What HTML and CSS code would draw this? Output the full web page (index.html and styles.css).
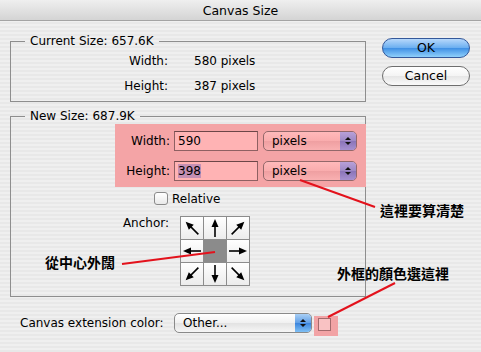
FILE: index.html
```html
<!DOCTYPE html>
<html lang="zh-Hant">

<head>
   <meta charset="UTF-8">
   <title>Canvas Size</title>
   <link rel="stylesheet" href="styles.css">
</head>

<body>
   <div class="window">
      <!-- Başlık çubuğu -->
      <div class="titlebar">Canvas Size</div>

      <div class="content">
         <div class="main">
            <!-- Mevcut boyut -->
            <fieldset class="group current">
               <legend>Current Size: 657.6K</legend>
               <div class="info-row"><span class="info-label">Width:</span><span>580 pixels</span></div>
               <div class="info-row"><span class="info-label">Height:</span><span>387 pixels</span></div>
            </fieldset>

            <!-- Yeni boyut -->
            <fieldset class="group new">
               <legend>New Size: 687.9K</legend>
               <div class="highlight">
                  <div class="field-row">
                     <label class="field-label" for="w">Width:</label>
                     <div class="text-box" id="w">590</div>
                     <div class="select pink">pixels<span class="stepper"><i class="up"></i><i class="down"></i></span></div>
                  </div>
                  <div class="field-row">
                     <label class="field-label" for="h">Height:</label>
                     <div class="text-box" id="h"><span class="selected">398</span></div>
                     <div class="select pink">pixels<span class="stepper"><i class="up"></i><i class="down"></i></span></div>
                  </div>
               </div>

               <div class="check-row">
                  <span class="checkbox"></span>
                  <span>Relative</span>
               </div>

               <div class="anchor-row">
                  <span class="anchor-label">Anchor:</span>
                  <div class="anchor-grid">
                     <div class="cell"><svg viewBox="0 0 22 22"><g transform="rotate(-45 11 11)"><line x1="11" y1="20" x2="11" y2="8" /><polygon points="11,2 7.5,10 14.5,10" /></g></svg></div>
                     <div class="cell"><svg viewBox="0 0 22 22"><g><line x1="11" y1="20" x2="11" y2="8" /><polygon points="11,2 7.5,10 14.5,10" /></g></svg></div>
                     <div class="cell"><svg viewBox="0 0 22 22"><g transform="rotate(45 11 11)"><line x1="11" y1="20" x2="11" y2="8" /><polygon points="11,2 7.5,10 14.5,10" /></g></svg></div>
                     <div class="cell"><svg viewBox="0 0 22 22"><g transform="rotate(-90 11 11)"><line x1="11" y1="20" x2="11" y2="8" /><polygon points="11,2 7.5,10 14.5,10" /></g></svg></div>
                     <div class="cell center"></div>
                     <div class="cell"><svg viewBox="0 0 22 22"><g transform="rotate(90 11 11)"><line x1="11" y1="20" x2="11" y2="8" /><polygon points="11,2 7.5,10 14.5,10" /></g></svg></div>
                     <div class="cell"><svg viewBox="0 0 22 22"><g transform="rotate(-135 11 11)"><line x1="11" y1="20" x2="11" y2="8" /><polygon points="11,2 7.5,10 14.5,10" /></g></svg></div>
                     <div class="cell"><svg viewBox="0 0 22 22"><g transform="rotate(180 11 11)"><line x1="11" y1="20" x2="11" y2="8" /><polygon points="11,2 7.5,10 14.5,10" /></g></svg></div>
                     <div class="cell"><svg viewBox="0 0 22 22"><g transform="rotate(135 11 11)"><line x1="11" y1="20" x2="11" y2="8" /><polygon points="11,2 7.5,10 14.5,10" /></g></svg></div>
                  </div>
               </div>
            </fieldset>
         </div>

         <!-- Butonlar -->
         <div class="side">
            <button class="btn ok">OK</button>
            <button class="btn cancel">Cancel</button>
         </div>
      </div>

      <!-- Genişletme rengi -->
      <div class="ext-row">
         <span class="ext-label">Canvas extension color:</span>
         <div class="select wide">Other...<span class="stepper aqua"><i class="up"></i><i class="down"></i></span></div>
         <div class="swatch-mark"><span class="swatch"></span></div>
      </div>

      <!-- Açıklama notları -->
      <svg class="marks" viewBox="0 0 481 352">
         <line x1="300" y1="180" x2="375" y2="207" />
         <line x1="122" y1="264" x2="215" y2="252" />
         <line x1="395" y1="283" x2="328" y2="317" />
      </svg>
      <span class="note note-size">這裡要算清楚</span>
      <span class="note note-anchor">從中心外闊</span>
      <span class="note note-color">外框的顏色選這裡</span>
   </div>
</body>

</html>
```

FILE: styles.css
```css
/* Sayfa genel düzeni */
body {
   margin: 0;
   font-family: "DejaVu Sans", "Noto Sans CJK TC", sans-serif;
   font-size: 12px;
   color: #000;
}

.window {
   position: relative;
   width: 481px;
   height: 352px;
   overflow: hidden;
   background: repeating-linear-gradient(#efefef 0 2px, #e8e8e8 2px 4px);
}

/* Başlık çubuğu */
.titlebar {
   height: 21px;
   line-height: 21px;
   text-align: center;
   font-size: 12.5px;
   background: linear-gradient(#efefef, #d4d4d4);
   border-bottom: 1px solid #a3a3a3;
   box-sizing: border-box;
}

.content {
   display: flex;
   padding-left: 10px;
}

.main {
   width: 356px;
   padding-top: 12px;
}

/* Grup kutuları */
.group {
   margin: 0;
   padding: 0;
   border: 1px solid #8e8e8e;
   min-width: 0;
}

.group legend {
   margin-left: 14px;
   padding: 0 5px;
   line-height: 16px;
}

.current {
   padding-bottom: 2px;
}

.new {
   margin-top: 6px;
   padding-bottom: 10px;
}

.info-row {
   display: flex;
   line-height: 25px;
}

.info-label {
   width: 157px;
   text-align: right;
   margin-right: 26px;
}

/* Pembe vurgulu alan */
.highlight {
   margin-left: 104px;
   margin-right: -1px;
   padding: 7px 0 6px;
   background: #f4a4a6;
   display: flex;
   flex-direction: column;
   gap: 10px;
}

.field-row {
   display: flex;
   align-items: center;
   height: 20px;
}

.field-label {
   width: 55px;
   text-align: right;
   margin-right: 4px;
}

.text-box {
   width: 84px;
   height: 20px;
   box-sizing: border-box;
   border: 1px solid #8e6062;
   border-top-color: #6d4648;
   background: #ffb3b4;
   padding-left: 3px;
   line-height: 18px;
   margin-right: 5px;
}

.selected {
   background: #c48fb3;
}

/* Açılır liste */
.select {
   position: relative;
   height: 20px;
   box-sizing: border-box;
   border: 1px solid #8a8a8a;
   border-radius: 5px;
   padding-left: 8px;
   line-height: 18px;
   background: linear-gradient(#ffffff, #f0f0f0 50%, #e2e2e2 51%, #f6f6f6);
}

.select.pink {
   width: 94px;
   border-color: #93686a;
   background: linear-gradient(#ffb9ba, #f9acad 50%, #ef9fa1 51%, #f9b0b1);
}

.stepper {
   position: absolute;
   right: 0;
   top: 0;
   bottom: 0;
   width: 16px;
   border-radius: 0 4px 4px 0;
   background: linear-gradient(#b8a0d8, #9d88c4 50%, #8a74b8 51%, #a791d0);
   display: flex;
   flex-direction: column;
   align-items: center;
   justify-content: center;
   gap: 2px;
}

.stepper.aqua {
   background: linear-gradient(#a9cff5, #5f9ee6 50%, #3b84dc 51%, #7fc0f5);
}

.stepper i {
   width: 0;
   height: 0;
   border-left: 3px solid transparent;
   border-right: 3px solid transparent;
}

.stepper .up {
   border-bottom: 3px solid #111;
}

.stepper .down {
   border-top: 3px solid #111;
}

/* Onay kutusu */
.check-row {
   display: flex;
   align-items: center;
   height: 17px;
   margin: 3px 0 0 143px;
}

.checkbox {
   width: 14px;
   height: 13px;
   box-sizing: border-box;
   border: 1px solid #8a8a8a;
   border-radius: 3px;
   background: linear-gradient(#ffffff, #e9e9e9);
   margin-right: 4px;
}

/* Çapa ızgarası */
.anchor-row {
   display: flex;
   margin-top: 9px;
}

.anchor-label {
   width: 158px;
   text-align: right;
   margin-right: 11px;
   line-height: 14px;
}

.anchor-grid {
   display: grid;
   grid-template-columns: repeat(3, 22px);
   grid-template-rows: repeat(3, 22px);
   gap: 1px;
   border: 1px solid #8c8c8c;
   background: #8c8c8c;
}

.cell {
   background: linear-gradient(#ffffff, #ececec);
}

.cell.center {
   background: #8b8b8b;
}

.cell svg {
   display: block;
   width: 22px;
   height: 22px;
}

.cell line {
   stroke: #000;
   stroke-width: 1.6;
}

.cell polygon {
   fill: #000;
}

/* Butonlar */
.side {
   display: flex;
   flex-direction: column;
   gap: 8px;
   margin-left: 16px;
   padding-top: 17px;
}

.btn {
   width: 88px;
   height: 20px;
   border-radius: 10px;
   border: 1px solid #6e6e6e;
   font-family: inherit;
   font-size: 12.5px;
   padding: 0;
   line-height: 18px;
   color: #000;
}

.btn.ok {
   border-color: #34589a;
   background: linear-gradient(#b7d8fb, #6aaef0 50%, #3f8fe4 51%, #8fd0fb);
}

.btn.cancel {
   background: linear-gradient(#ffffff, #f4f4f4 50%, #e6e6e6 51%, #fafafa);
}

/* Alt satır */
.ext-row {
   display: flex;
   align-items: flex-start;
   margin-top: 16px;
   padding-left: 20px;
}

.ext-label {
   width: 154px;
   line-height: 20px;
}

.select.wide {
   width: 138px;
}

.swatch-mark {
   width: 24px;
   height: 20px;
   margin: 3px 0 0 2px;
   background: #f2a3a5;
   display: flex;
   justify-content: center;
   padding-top: 2px;
   box-sizing: border-box;
}

.swatch {
   width: 13px;
   height: 13px;
   box-sizing: border-box;
   border: 1px solid #a36a6c;
   background: #f9c2c3;
   margin-left: -3px;
}

/* Notlar */
.marks {
   position: absolute;
   left: 0;
   top: 0;
   width: 481px;
   height: 352px;
}

.marks line {
   stroke: #e3121c;
   stroke-width: 2;
}

.note {
   position: absolute;
   font-family: "Noto Sans CJK TC", sans-serif;
   font-weight: bold;
   font-size: 14px;
   line-height: 16px;
}

.note-size {
   left: 380px;
   top: 202px;
}

.note-anchor {
   left: 45px;
   top: 254px;
}

.note-color {
   left: 337px;
   top: 265px;
}
```
